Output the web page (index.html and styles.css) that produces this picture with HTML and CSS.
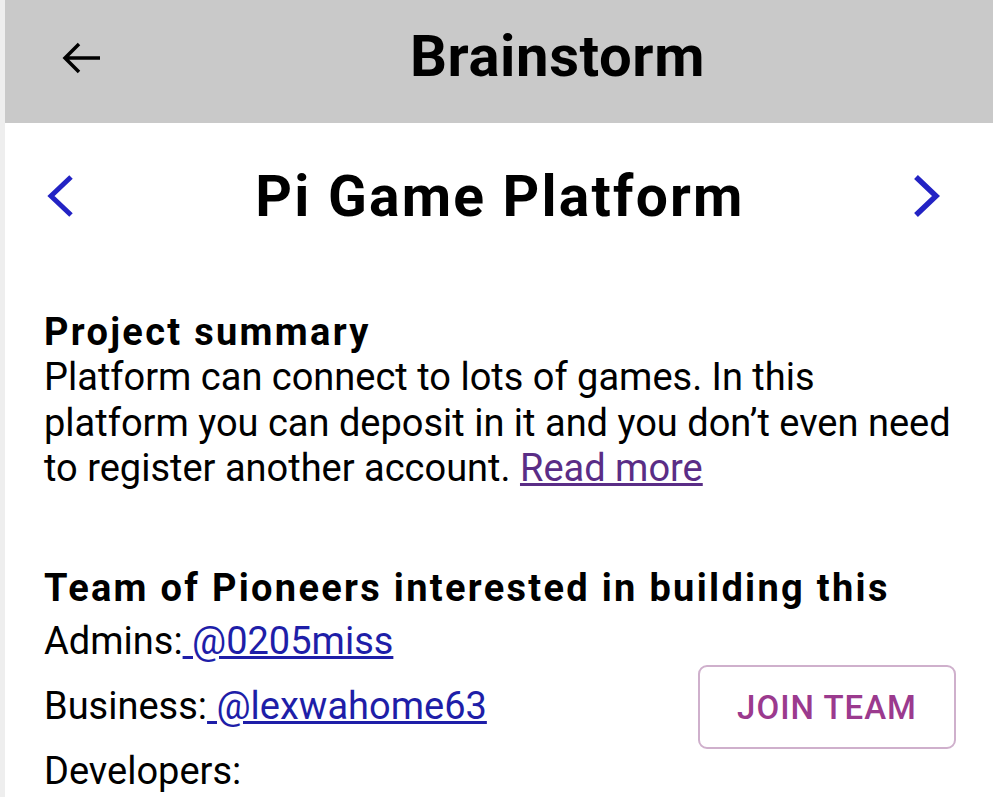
FILE: index.html
```html
<!DOCTYPE html>
<html lang="en">
<head>
    <meta charset="UTF-8">
    <meta name="viewport" content="width=device-width, initial-scale=1.0">
    <title>Brainstorm</title>
    <link rel="stylesheet" href="styles.css">
</head>
<body>
    <div class="screen">
        <header class="app-bar">
            <button class="back-btn" aria-label="Back">
                <svg width="40" height="32" viewBox="0 0 40 32">
                    <path d="M38 16H4M17 2L3 16l14 14" fill="none" stroke="#000" stroke-width="3.5"/>
                </svg>
            </button>
            <h1 class="app-title">Brainstorm</h1>
        </header>

        <div class="content">
            <div class="project-nav">
                <button class="nav-btn" aria-label="Previous">
                    <svg width="32" height="44" viewBox="0 0 32 44">
                        <path d="M27 3L7 22l20 19" fill="none" stroke="#2323c4" stroke-width="5"/>
                    </svg>
                </button>
                <h2 class="project-title">Pi Game Platform</h2>
                <button class="nav-btn next" aria-label="Next">
                    <svg width="32" height="44" viewBox="0 0 32 44">
                        <path d="M5 3l20 19L5 41" fill="none" stroke="#2323c4" stroke-width="5.5"/>
                    </svg>
                </button>
            </div>

            <section class="summary">
                <h3>Project summary</h3>
                <p>Platform can connect to lots of games. In this platform you can deposit in it and you don&rsquo;t even need to register another account. <a href="#" class="visited">Read more</a></p>
            </section>

            <section class="team">
                <h3>Team of Pioneers interested in building this</h3>
                <div class="team-body">
                    <ul class="roles">
                        <li>Admins:<a href="#"> @0205miss</a></li>
                        <li>Business:<a href="#"> @lexwahome63</a></li>
                        <li>Developers:</li>
                    </ul>
                    <button class="join-btn">JOIN TEAM</button>
                </div>
            </section>
        </div>
    </div>
</body>
</html>
```

FILE: styles.css
```css
body {
    margin: 0;
    font-family: Roboto, "Liberation Sans", sans-serif;
    background-color: #ffffff;
    color: #000;
}

.screen {
    width: 993px;
    height: 797px;
    overflow: hidden;
    border-left: 5px solid #eeeeee;
    box-sizing: border-box;
}

.app-bar {
    display: flex;
    align-items: center;
    height: 123px;
    background-color: #c9c9c9;
}

.back-btn {
    width: 117px;
    height: 100%;
    padding: 0 0 8px 57px;
    border: none;
    background: none;
    display: flex;
    align-items: center;
}

.app-title {
    flex: 1;
    margin: 0;
    text-align: center;
    font-size: 58px;
    font-weight: 700;
    letter-spacing: 0.6px;
    padding-bottom: 12px;
}

.content {
    padding: 0 37px 0 39px;
}

.project-nav {
    display: grid;
    grid-template-columns: 1fr auto 1fr;
    align-items: center;
    height: 146px;
}

.nav-btn {
    border: none;
    background: none;
    padding: 0;
    display: flex;
}

.nav-btn.next {
    justify-self: end;
    margin-right: 13px;
}

.project-title {
    margin: 0;
    font-size: 57px;
    font-weight: 700;
    letter-spacing: 2.2px;
}

h3 {
    margin: 0;
    font-size: 38px;
    line-height: 45px;
    font-weight: 700;
    letter-spacing: 2.3px;
}

.summary {
    margin-top: 41px;
}

.summary p {
    margin: 0;
    font-size: 38px;
    line-height: 45.5px;
}

a {
    color: #1e1ea8;
}

a.visited {
    color: #5a2d86;
}

.team {
    margin-top: 74px;
}

.team-body {
    display: flex;
    align-items: center;
    justify-content: space-between;
}

.roles {
    list-style: none;
    margin: -2px 0 0;
    padding: 0;
    font-size: 38px;
    line-height: 65px;
}

.join-btn {
    width: 258px;
    height: 84px;
    border: 2px solid #cfb0cc;
    border-radius: 9px;
    background: #fff;
    color: #9b3a8e;
    font-family: Roboto, sans-serif;
    font-size: 33px;
    font-weight: 500;
    letter-spacing: 1px;
}
```
